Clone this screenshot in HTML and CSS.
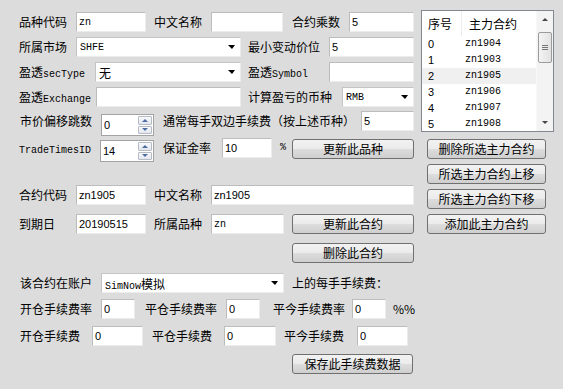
FILE: index.html
```html
<!DOCTYPE html>
<html lang="zh">
<head>
    <meta charset="UTF-8">
    <meta name="viewport" content="width=device-width, initial-scale=1.0">
    <title>品种设置</title>
    <link rel="stylesheet" href="styles.css">
</head>
<body>
    <div class="dialog">
        <div class="form">
            <!-- 品种 -->
            <div class="row first">
                <span class="lbl w57">品种代码</span>
                <input class="edit w70" type="text" value="zn">
                <span class="lbl ml8 w57">中文名称</span>
                <input class="edit w72" type="text" value="">
                <span class="lbl ml9 w57">合约乘数</span>
                <input class="edit num w65" type="text" value="5">
            </div>
            <div class="row">
                <span class="lbl w57">所属市场</span>
                <div class="combo w165"><span class="val mono">SHFE</span><i class="drop"></i></div>
                <span class="lbl ml7 w81">最小变动价位</span>
                <input class="edit num w85" type="text" value="5">
            </div>
            <div class="row">
                <span class="lbl w76">盈透<span class="mono">secType</span></span>
                <div class="combo w146"><span class="val">无</span><i class="drop"></i></div>
                <span class="lbl ml7 w81">盈透<span class="mono">Symbol</span></span>
                <input class="edit w85" type="text" value="">
            </div>
            <div class="row">
                <span class="lbl w77">盈透<span class="mono">Exchange</span></span>
                <input class="edit w145" type="text" value="">
                <span class="lbl ml7 w94">计算盈亏的币种</span>
                <div class="combo w72"><span class="val mono">RMB</span><i class="drop"></i></div>
            </div>
            <div class="row tight">
                <span class="lbl w82 ind1">市价偏移跳数</span>
                <div class="spin w53 down3">
                    <input class="num" type="text" value="0">
                    <div class="spin-btns"><span><i class="up"></i></span><span><i class="dn"></i></span></div>
                </div>
                <span class="lbl ml9 w198">通常每手双边手续费（按上述币种）</span>
                <input class="edit num w53" type="text" value="5">
            </div>
            <div class="row mt7">
                <span class="lbl w81"><span class="mono">TradeTimesID</span></span>
                <div class="spin w54 down2">
                    <input class="num" type="text" value="14">
                    <div class="spin-btns"><span><i class="up"></i></span><span><i class="dn"></i></span></div>
                </div>
                <span class="lbl ml9 w59">保证金率</span>
                <input class="edit num w50" type="text" value="10">
                <span class="lbl ml8 w12 mono">%</span>
                <button class="btn w122 down1">更新此品种</button>
            </div>

            <!-- 合约 -->
            <div class="row mt27">
                <span class="lbl w57">合约代码</span>
                <input class="edit num w70" type="text" value="zn1905">
                <span class="lbl ml8 w57">中文名称</span>
                <input class="edit num w203" type="text" value="zn1905">
            </div>
            <div class="row mt9">
                <span class="lbl w57">到期日</span>
                <input class="edit num w70" type="text" value="20190515">
                <span class="lbl ml8 w57">所属品种</span>
                <input class="edit w73" type="text" value="zn">
                <button class="btn ml8 w122">更新此合约</button>
            </div>
            <div class="row mt9">
                <button class="btn ml273 w122">删除此合约</button>
            </div>

            <!-- 手续费 -->
            <div class="row mt10">
                <span class="lbl w82 ind1">该合约在账户</span>
                <div class="combo w183"><span class="val"><span class="mono">SimNow</span>模拟</span><i class="drop"></i></div>
                <span class="lbl ml8">上的每手手续费：</span>
            </div>
            <div class="row mt6">
                <span class="lbl w82 ind1">开仓手续费率</span>
                <input class="edit num w34" type="text" value="0">
                <span class="lbl ml10 w81">平仓手续费率</span>
                <input class="edit num w34" type="text" value="0">
                <span class="lbl ml13 w79">平今手续费率</span>
                <input class="edit num w34" type="text" value="0">
                <span class="lbl ml7">%%</span>
            </div>
            <div class="row mt7">
                <span class="lbl w73 ind1">开仓手续费</span>
                <input class="edit num w51" type="text" value="0">
                <span class="lbl ml9 w72">平仓手续费</span>
                <input class="edit num w52" type="text" value="0">
                <span class="lbl ml8 w73">平今手续费</span>
                <input class="edit num w51" type="text" value="0">
            </div>
            <div class="row mt8">
                <button class="btn ml273 w121">保存此手续费数据</button>
            </div>
        </div>

        <div class="side">
            <div class="list">
                <div class="list-body">
                    <div class="list-head"><span class="c1">序号</span><span class="c2">主力合约</span></div>
                    <div class="list-row"><span class="c1">0</span><span class="c2">zn1904</span></div>
                    <div class="list-row"><span class="c1">1</span><span class="c2">zn1903</span></div>
                    <div class="list-row sel"><span class="c1">2</span><span class="c2">zn1905</span></div>
                    <div class="list-row"><span class="c1">3</span><span class="c2">zn1906</span></div>
                    <div class="list-row"><span class="c1">4</span><span class="c2">zn1907</span></div>
                    <div class="list-row"><span class="c1">5</span><span class="c2">zn1908</span></div>
                </div>
                <div class="vscroll">
                    <div class="sb-arrow"><i class="up dark"></i></div>
                    <div class="thumb"><b></b><b></b><b></b></div>
                    <div class="sb-track"></div>
                    <div class="sb-arrow"><i class="dn dark"></i></div>
                </div>
            </div>
            <button class="btn sbtn first">删除所选主力合约</button>
            <button class="btn sbtn">所选主力合约上移</button>
            <button class="btn sbtn">所选主力合约下移</button>
            <button class="btn sbtn">添加此主力合约</button>
        </div>
    </div>
</body>
</html>
```

FILE: styles.css
```css
*{
    margin: 0;
    padding: 0;
    box-sizing: border-box;
}
body{
    width: 563px;
    height: 389px;
    overflow: hidden;
    background-color: #dcdcdc;
    color: #000;
    font-family: "Noto Sans CJK SC", sans-serif;
    font-size: 12px;
}
.dialog{
    display: flex;
}
.form{
    width: 421px;
    padding: 12px 0 0 19px;
}
.row{
    display: flex;
    align-items: flex-start;
    height: 20px;
    margin-top: 5px;
}
.row.first{ margin-top: 0; }
.row.tight{ margin-top: 4px; }
.mt6{ margin-top: 6px; }
.mt7{ margin-top: 7px; }
.mt8{ margin-top: 8px; }
.mt9{ margin-top: 9px; }
.mt10{ margin-top: 10px; }
.mt27{ margin-top: 27px; }
.down1{ margin-top: 1px; }
.down2{ margin-top: 2px; }
.down3{ margin-top: 3px; }

.lbl{
    line-height: 20px;
    white-space: nowrap;
    flex-shrink: 0;
}
.ind1{ padding-left: 1px; }
.mono{
    font-family: "Liberation Mono", monospace;
    font-size: 10px;
}

/* widths */
.w12{ width: 12px; }
.w34{ width: 34px; }
.w50{ width: 50px; }
.w51{ width: 51px; }
.w52{ width: 52px; }
.w53{ width: 53px; }
.w54{ width: 54px; }
.w57{ width: 57px; }
.w59{ width: 59px; }
.w65{ width: 65px; }
.w70{ width: 70px; }
.w72{ width: 72px; }
.w73{ width: 73px; }
.w76{ width: 76px; }
.w77{ width: 77px; }
.w79{ width: 79px; }
.w81{ width: 81px; }
.w82{ width: 82px; }
.w85{ width: 85px; }
.w94{ width: 94px; }
.w121{ width: 121px; }
.w122{ width: 122px; }
.w145{ width: 145px; }
.w146{ width: 146px; }
.w165{ width: 165px; }
.w183{ width: 183px; }
.w198{ width: 198px; }
.w203{ width: 203px; }
.ml7{ margin-left: 7px; }
.ml8{ margin-left: 8px; }
.ml9{ margin-left: 9px; }
.ml10{ margin-left: 10px; }
.ml13{ margin-left: 13px; }
.ml273{ margin-left: 273px; }

/* text boxes */
.edit{
    height: 20px;
    flex-shrink: 0;
    border: 1px solid;
    border-color: #bcbcbc #ececec #ececec #bcbcbc;
    background-color: #fff;
    padding: 0 2px;
    font-family: "Liberation Mono", monospace;
    font-size: 10px;
    color: #000;
    outline: none;
}
input.num, .edit.num{
    font-family: "Liberation Sans", sans-serif;
    font-size: 11px;
}

/* combo boxes */
.combo{
    display: flex;
    align-items: center;
    height: 20px;
    flex-shrink: 0;
    background-color: #fff;
    border: 1px solid;
    border-color: #c4c4c4 #ececec #ececec #c4c4c4;
    padding-left: 3px;
}
.combo .val{
    flex: 1;
    white-space: nowrap;
}
.drop{
    width: 0;
    height: 0;
    border-top: 4px solid #000;
    border-left: 4px solid transparent;
    border-right: 3px solid transparent;
    margin-right: 5px;
}

/* spin boxes */
.spin{
    display: flex;
    height: 22px;
    flex-shrink: 0;
    background-color: #fff;
    border: 1px solid #a3a3a3;
}
.spin input{
    flex: 1;
    min-width: 0;
    border: none;
    outline: none;
    padding-left: 2px;
    background: transparent;
}
.spin-btns{
    width: 17px;
    display: flex;
    flex-direction: column;
    gap: 1px;
    padding: 1px 1px 1px 2px;
}
.spin-btns span{
    flex: 1;
    display: flex;
    align-items: center;
    justify-content: center;
    border: 1px solid #b7bcc4;
    border-radius: 1px;
    background: linear-gradient(#f8f9fb, #e3e7ee);
}
.up, .dn{
    width: 0;
    height: 0;
    border-left: 3px solid transparent;
    border-right: 3px solid transparent;
}
.up{ border-bottom: 3px solid #4d6ea3; }
.dn{ border-top: 3px solid #4d6ea3; }
.up.dark{ border-bottom-color: #444; }
.dn.dark{ border-top-color: #444; }

/* buttons */
.btn{
    height: 20px;
    flex-shrink: 0;
    border: 1px solid #707070;
    border-radius: 3px;
    background: linear-gradient(#f2f2f2 0%, #ebebeb 50%, #dddddd 50%, #cfcfcf 100%);
    font-family: "Noto Sans CJK SC", sans-serif;
    font-size: 12px;
    line-height: 18px;
    color: #000;
    text-align: center;
}

/* right column */
.side{
    width: 133px;
    padding-top: 10px;
}
.list{
    display: flex;
    height: 122px;
    border: 1px solid #828790;
    background-color: #fff;
}
.list-body{
    flex: 1;
    overflow: hidden;
}
.list-head, .list-row{
    display: flex;
    white-space: nowrap;
}
.list-head{
    height: 25px;
    line-height: 25px;
}
.list-row{
    height: 16px;
    line-height: 16px;
}
.list-row.sel{
    background-color: #f0f0f0;
}
.c1{
    width: 40px;
    padding-left: 6px;
}
.list-head .c1{
    border-right: 1px solid #ececec;
}
.c2{
    padding-left: 3px;
}
.list-head .c2{
    padding-left: 7px;
}
.list-row .c1{
    font-family: "Liberation Sans", sans-serif;
    font-size: 11px;
}
.list-row .c2{
    font-family: "Liberation Mono", monospace;
    font-size: 10px;
}
.vscroll{
    width: 17px;
    display: flex;
    flex-direction: column;
    align-items: center;
    background-color: #f3f3f3;
    border-left: 1px solid #f8f8f8;
}
.sb-arrow{
    height: 17px;
    display: flex;
    align-items: center;
    justify-content: center;
}
.thumb{
    margin-top: 4px;
    width: 14px;
    height: 31px;
    border: 1px solid #9b9b9b;
    border-radius: 2px;
    background: linear-gradient(90deg, #f4f4f4, #e2e2e2);
    display: flex;
    flex-direction: column;
    align-items: center;
    justify-content: center;
    gap: 1px;
}
.thumb b{
    display: block;
    width: 6px;
    height: 1px;
    background-color: #777;
}
.sb-track{
    flex: 1;
}
.sbtn{
    display: block;
    width: 119px;
    margin: 5px 0 0 6px;
}
.sbtn.first{
    margin-top: 7px;
}
```
